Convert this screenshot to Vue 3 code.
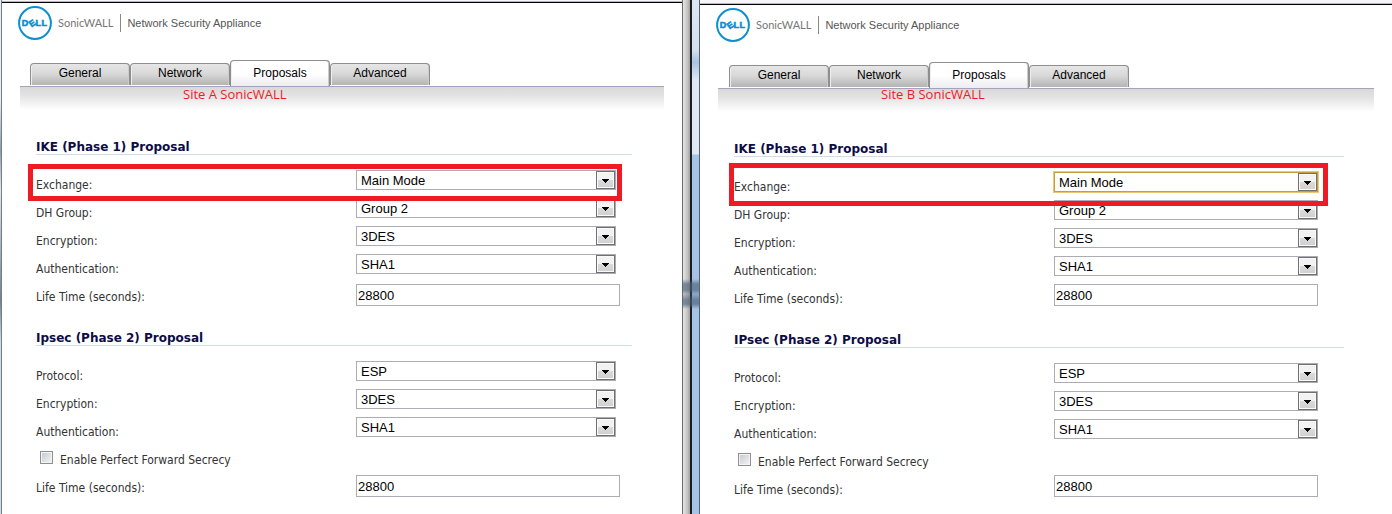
<script setup>
import { reactive } from 'vue'

const tabs = ['General', 'Network', 'Proposals', 'Advanced']

const createSite = (id, note, phase2Title) => ({
  id,
  note,
  activeTab: 'Proposals',
  sections: [
    {
      title: 'IKE (Phase 1) Proposal',
      fields: [
        { key: 'exchange', label: 'Exchange:', type: 'select', value: 'Main Mode', options: ['Main Mode', 'Aggressive Mode', 'IKEv2 Mode'], marked: true },
        { key: 'dh', label: 'DH Group:', type: 'select', value: 'Group 2', options: ['Group 1', 'Group 2', 'Group 5'] },
        { key: 'enc1', label: 'Encryption:', type: 'select', value: '3DES', options: ['DES', '3DES', 'AES-128'] },
        { key: 'auth1', label: 'Authentication:', type: 'select', value: 'SHA1', options: ['MD5', 'SHA1'] },
        { key: 'life1', label: 'Life Time (seconds):', type: 'text', value: '28800' }
      ]
    },
    {
      title: phase2Title,
      fields: [
        { key: 'protocol', label: 'Protocol:', type: 'select', value: 'ESP', options: ['ESP', 'AH'] },
        { key: 'enc2', label: 'Encryption:', type: 'select', value: '3DES', options: ['DES', '3DES', 'AES-128'] },
        { key: 'auth2', label: 'Authentication:', type: 'select', value: 'SHA1', options: ['MD5', 'SHA1'] },
        { key: 'pfs', label: 'Enable Perfect Forward Secrecy', type: 'checkbox', value: false },
        { key: 'life2', label: 'Life Time (seconds):', type: 'text', value: '28800' }
      ]
    }
  ]
})

const sites = reactive([
  createSite('a', 'Site A SonicWALL', 'Ipsec (Phase 2) Proposal'),
  createSite('b', 'Site B SonicWALL', 'IPsec (Phase 2) Proposal')
])
</script>

<template>
  <main class="desktop">
    <section v-for="site in sites" :key="site.id" class="window" :class="'site-' + site.id">
      <div class="frame"></div>
      <div class="page">
        <div class="top-bar"></div>
        <header class="brand">
          <svg class="logo" viewBox="0 0 34 34" role="img" aria-label="Dell">
            <circle cx="17" cy="17" r="15.9" fill="#fff" stroke="#0b8fd0" stroke-width="2" />
            <g class="logo-text">
              <text x="3.8" y="20.3">D</text>
              <text x="11.2" y="20.3" transform="rotate(-35 14.2 17)">E</text>
              <text x="17.6" y="20.3">L</text>
              <text x="23.4" y="20.3">L</text>
            </g>
          </svg>
          <span class="brand-name">SonicWALL</span>
          <span class="product">Network Security Appliance</span>
        </header>

        <nav class="tabs">
          <button
            v-for="tab in tabs"
            :key="tab"
            type="button"
            class="tab"
            :class="{ active: tab === site.activeTab }"
            @click="site.activeTab = tab"
          >{{ tab }}</button>
        </nav>
        <div class="strip"><p class="note">{{ site.note }}</p></div>

        <form class="proposals" @submit.prevent>
          <template v-for="section in site.sections" :key="section.title">
            <h2>{{ section.title }}</h2>
            <div v-for="field in section.fields" :key="field.key" class="row" :class="{ marked: field.marked }">
              <template v-if="field.type === 'checkbox'">
                <input :id="site.id + field.key" v-model="field.value" type="checkbox" />
                <label :for="site.id + field.key">{{ field.label }}</label>
              </template>
              <template v-else>
                <label class="field-label" :for="site.id + field.key">{{ field.label }}</label>
                <span v-if="field.type === 'select'" class="select">
                  <select :id="site.id + field.key" v-model="field.value">
                    <option v-for="option in field.options" :key="option">{{ option }}</option>
                  </select>
                  <span class="arrow">
                    <svg viewBox="0 0 7 4"><path d="M0 0h7v1h-1v1h-1v1h-1v1h-1v-1h-1v-1h-1v-1h-1z" /></svg>
                  </span>
                </span>
                <input v-else :id="site.id + field.key" v-model="field.value" type="text" />
              </template>
            </div>
          </template>
        </form>
      </div>
    </section>
  </main>
</template>

<style>
body {
  margin: 0;
  background: #fff;
}
</style>

<style scoped>
.desktop {
  display: grid;
  grid-template-columns: minmax(0, 682fr) minmax(0, 710fr);
  min-height: 100vh;
  font-family: "Liberation Sans", Arial, sans-serif;
  font-size: 13px;
  color: #000;
}

.window {
  display: flex;
}

.page {
  flex: 1;
  min-width: 0;
}

/* window borders */
.frame {
  flex: none;
  box-sizing: border-box;
  width: 2px;
  border-right: 1px solid #777d83;
  background: linear-gradient(#e6edf5 0 100px, #8b9db0 150px, #dfe8f1 190px, #6f8294 300px, #cbd9e8 340px);
}

.site-b .frame {
  width: 18px;
  border-right: 1px solid #566270;
  background:
    linear-gradient(transparent 279px, #4a6078aa 284px 290px, #4a607844 294px, #4a6078aa 300px 304px, transparent 309px),
    linear-gradient(90deg, #6b6b6b 0 1px, #e6e6e6 1px, #c8c8c6 5px, #a2a3a1 8px, #1c1c22 8px 10px, transparent 10px),
    linear-gradient(#dde7f4 0, #d4e0f0 50px, #a9c3e0 62px, #dfe8f4 80px 154px, #a5c3e5 155px);
}

.top-bar {
  box-sizing: border-box;
  height: 3px;
  border-bottom: 1px solid #000;
  background: linear-gradient(#f6f6f8 1px, #b6b8c2 1px);
}

.site-b .top-bar {
  height: 5px;
  background: linear-gradient(#f6f6f8 3px, #b6b8c2 3px);
}

.brand {
  display: flex;
  align-items: center;
  box-sizing: border-box;
  height: 57px;
  padding: 0 16px 17px;
}

.logo {
  width: 34px;
  height: 34px;
}

.logo-text {
  fill: #0b8fd0;
  stroke: #0b8fd0;
  stroke-width: 0.6;
  font: bold 9px "Liberation Sans", Arial, sans-serif;
}

.brand-name {
  margin-left: 6px;
  padding-right: 7px;
  border-right: 1px solid #888;
  font-family: Lato, sans-serif;
  font-size: 11px;
  line-height: 18px;
  color: #777;
}

.product {
  margin-left: 6px;
  font-size: 11px;
  color: #555;
}

.tabs {
  display: flex;
  align-items: flex-end;
  height: 26px;
  padding-left: 28px;
}

.site-b .tabs {
  padding-left: 29px;
}

.tab {
  width: 100px;
  height: 22px;
  margin: 0 0 1px;
  padding: 0 0 3px;
  border: 1px solid #8e8e8e;
  border-bottom: 0;
  border-radius: 4px 4px 0 0;
  background: linear-gradient(#e6e6e6, #d9d9d9 45%, #b4b4b4);
  box-shadow: inset 1px 0 #eee, inset -1px 0 #ccc;
  font-family: inherit;
  font-size: 12px;
  color: #000;
  cursor: pointer;
}

.tab.active {
  height: 26px;
  margin: 0;
  padding-bottom: 1px;
  background: linear-gradient(#fff, #fff 50%, #ececf2);
}

.strip {
  box-sizing: border-box;
  height: 33px;
  margin: 0 18px;
  padding: 0 163px;
  border-top: 1px solid #a5a2bd;
  background: linear-gradient(#d9d9d9, #e2e2e2 8px, #fff 23px);
}

.note {
  margin: 0;
  font-family: "Open Sans", "Noto Sans", sans-serif;
  font-size: 13px;
  line-height: 14px;
  color: #ed1c24;
  white-space: nowrap;
}

.site-b .note {
  line-height: 10px;
}

.proposals {
  padding: 0 50px 13px 34px;
}

.site-b .proposals {
  padding-right: 48px;
}

h2 {
  box-sizing: border-box;
  height: 36px;
  margin: 0 0 15px;
  padding-top: 18px;
  border-bottom: 1px solid #cfdde6;
  font-family: "DejaVu Sans", Verdana, sans-serif;
  font-size: 12px;
  font-weight: bold;
  line-height: 20px;
  color: #0c0c46;
}

.row {
  position: relative;
  display: flex;
  align-items: flex-start;
  height: 28px;
  font-family: "DejaVu Sans Condensed", Tahoma, sans-serif;
  font-size: 12px;
  line-height: 30px;
  color: #333;
}

.field-label {
  flex: 0 1 320px;
}

/* red frame around the setting to change */
.marked::after {
  content: "";
  position: absolute;
  z-index: 1;
  top: -6px;
  left: -8px;
  box-sizing: border-box;
  width: 594px;
  height: 37px;
  border: 5px solid #ed1c24;
  pointer-events: none;
}

.site-b .marked::after {
  top: -9px;
  left: -5px;
  width: 599px;
  height: 43px;
}

.select {
  position: relative;
  display: flex;
  width: 260px;
}

.site-b .select {
  width: 264px;
}

select,
input[type="text"] {
  box-sizing: border-box;
  margin: 0;
  border: 1px solid #abadb3;
  border-radius: 0;
  background: #fff;
  font-family: "Liberation Sans", Arial, sans-serif;
  font-size: 13px;
  color: #000;
}

select {
  appearance: none;
  width: 100%;
  height: 20px;
  padding: 0 20px 0 4px;
}

.site-b .marked select {
  border-color: #c89b45;
  outline: 1px solid #eec773;
}

input[type="text"] {
  width: 264px;
  height: 22px;
  margin-top: 2px;
  padding: 0 1px;
}

.site-b input[type="text"] {
  margin-top: 0;
}

.arrow {
  position: absolute;
  top: 1px;
  right: 1px;
  display: flex;
  align-items: center;
  justify-content: center;
  box-sizing: border-box;
  width: 19px;
  height: 18px;
  padding-top: 2px;
  border: 1px solid #707070;
  background: linear-gradient(#f2f2f2 50%, #dadada 50%, #d0d0d0);
  box-shadow: inset 0 0 0 1px #fafafa;
  pointer-events: none;
}

.arrow svg {
  width: 7px;
  height: 4px;
}

input[type="checkbox"] {
  appearance: none;
  box-sizing: border-box;
  width: 13px;
  height: 13px;
  margin: 6px 7px 0 4px;
  border: 1px solid #8e8f8f;
  background: linear-gradient(135deg, #c3c7cd, #f6f6f6);
  box-shadow: inset 0 0 0 1px #f4f4f4;
}

input[type="checkbox"]:checked {
  background: #4b5c77;
}
</style>
